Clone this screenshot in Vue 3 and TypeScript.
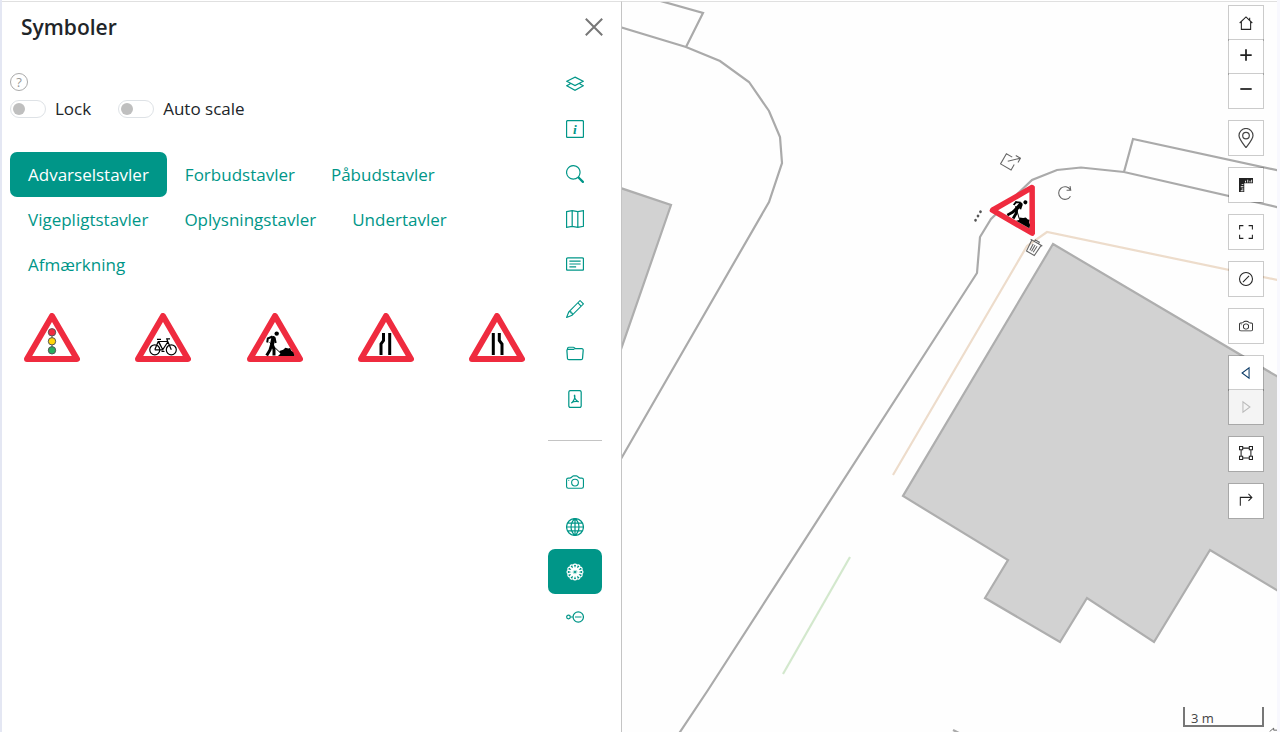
<script setup lang="ts">
import { ref } from 'vue'

interface Icon {
  stroke?: string
  fill?: string
  text?: string
}

function flower(): string {
  const point = (r: number, deg: number) => {
    const a = (deg * Math.PI) / 180
    return `${(8 + r * Math.cos(a)).toFixed(2)} ${(8 + r * Math.sin(a)).toFixed(2)}`
  }
  let d = ''
  for (let k = 0; k < 12; k++) {
    const c = k * 30
    d += `M${point(2.2, c)}L${point(6.3, c - 14)}A1.7 1.7 0 0 1 ${point(6.3, c + 14)}Z`
  }
  return d
}

const camera =
  'M15 12a1 1 0 0 1-1 1H2a1 1 0 0 1-1-1V6a1 1 0 0 1 1-1h1.172a3 3 0 0 0 2.12-.879l.83-.828A1 1 0 0 1 6.827 3h2.344a1 1 0 0 1 .707.293l.828.828A3 3 0 0 0 12.828 5H14a1 1 0 0 1 1 1zM2 4a2 2 0 0 0-2 2v6a2 2 0 0 0 2 2h12a2 2 0 0 0 2-2V6a2 2 0 0 0-2-2h-1.172a2 2 0 0 1-1.414-.586l-.828-.828A2 2 0 0 0 9.172 2H6.828a2 2 0 0 0-1.414.586l-.828.828A2 2 0 0 1 3.172 4zM8 11a2.5 2.5 0 1 1 0-5 2.5 2.5 0 0 1 0 5m0 1a3.5 3.5 0 1 0 0-7 3.5 3.5 0 0 0 0 7M3 6.5a.5.5 0 1 1-1 0 .5.5 0 0 1 1 0'

const icons: Record<string, Icon> = {
  layers: { stroke: 'M8 1.9 15.3 5.6 8 9.4 .7 5.6zM3.9 7.8 .7 9.6 8 13.5 15.3 9.6 12.1 7.8' },
  info: {
    stroke: 'M1.5.5h13a1 1 0 0 1 1 1v13a1 1 0 0 1-1 1h-13a1 1 0 0 1-1-1v-13a1 1 0 0 1 1-1z',
    text: 'i',
  },
  search: {
    fill: 'M11.742 10.344a6.5 6.5 0 1 0-1.397 1.398q.044.06.098.115l3.85 3.85a1 1 0 0 0 1.415-1.414l-3.85-3.85a1 1 0 0 0-.115-.1zM12 6.5a5.5 5.5 0 1 1-11 0 5.5 5.5 0 0 1 11 0',
  },
  map: { stroke: 'M.5 1.5 5.5.6l5 .9 5-.9v13.9l-5 .9-5-.9-5 .9zM5.5.6v13.9M10.5 1.5v13.9' },
  text: {
    stroke:
      'M1.5 2.5h13a1 1 0 0 1 1 1v9a1 1 0 0 1-1 1h-13a1 1 0 0 1-1-1v-9a1 1 0 0 1 1-1zM3 5.5h10M3 8h10M3 10.5h6',
  },
  pencil: {
    fill: 'M12.146.146a.5.5 0 0 1 .708 0l3 3a.5.5 0 0 1 0 .708l-10 10a.5.5 0 0 1-.168.11l-5 2a.5.5 0 0 1-.65-.65l2-5a.5.5 0 0 1 .11-.168zM11.207 2.5 13.5 4.793 14.793 3.5 12.5 1.207zm1.586 3L10.5 3.207 4 9.707V10h.5a.5.5 0 0 1 .5.5v.5h.5a.5.5 0 0 1 .5.5v.5h.293zm-9.761 5.175-.106.106-1.528 3.821 3.821-1.528.106-.106A.5.5 0 0 1 5 12.5V12h-.5a.5.5 0 0 1-.5-.5V11h-.5a.5.5 0 0 1-.468-.325',
  },
  folder: {
    stroke:
      'M1.3 4.2 1.4 2.9a1 1 0 0 1 1-.9h4.1c.9 0 1.4 1.3 2.4 1.3h5.2a1.2 1.2 0 0 1 1.2 1.3l-.6 7.4a1.2 1.2 0 0 1-1.2 1.1h-11a1.2 1.2 0 0 1-1.2-1.1L.8 5a1 1 0 0 1 1-1.1h5.7',
  },
  pdf: {
    stroke:
      'M4 .5h8A1.5 1.5 0 0 1 13.5 2v12a1.5 1.5 0 0 1-1.5 1.5H4A1.5 1.5 0 0 1 2.5 14V2A1.5 1.5 0 0 1 4 .5zM7.5 4.2c.7 1.600.4 2.900-.3 4.300-.7 1.400-1.500 2.500-2.200 3M7.500 4.500c-.2 2.300 1.300 4.700 3.800 6.100M4.600 11.500c1.800-1.200 4-1.600 6.700-1.100',
  },
  camera: { fill: camera },
  globe: {
    stroke:
      'M8 .5a7.500 7.500 0 1 0 0 15 7.500 7.500 0 0 0 0-15zM8 .5v15M.5 8h15M1.600 4.500h12.800M1.600 11.500h12.800M8 .5C3.300 4.500 3.300 11.500 8 15.500M8 .5c4.700 4 4.700 11 0 15',
  },
  flower: { stroke: flower() },
  node: {
    stroke:
      'M2.200 6.400a1.600 1.600 0 1 0 0 3.200 1.600 1.600 0 0 0 0-3.200zM3.800 8h2.400M10.900 3.400a4.600 4.600 0 1 0 0 9.200 4.600 4.600 0 0 0 0-9.200zM8 8h5.800',
  },
  home: { stroke: 'M.8 8 8 1l7.200 7M2.700 6.500v8.800h10.600V6.500M12.200 2v3' },
  plus: { stroke: 'M8 1.500v13M1.500 8h13' },
  minus: { stroke: 'M1.500 8h13' },
  pin: {
    stroke:
      'M8 17.600C4.500 13 1 9 1 5.500a7 7 0 0 1 14 0C15 9 11.500 13 8 17.600zM8 2.300a3.300 3.300 0 1 0 0 6.600 3.300 3.300 0 0 0 0-6.600z',
  },
  ruler: {
    fill: 'M0 0h16v6H6v10H0zM7 3v2h1V3zM9.500 2v3h1V2zM12 3v2h1V3zM14 2v3h1V2zM3 7v1h2V7zM2 9.500v1h3v-1zM3 12v1h2v-1zM2 14v1h3v-1z',
  },
  full: { stroke: 'M.7 5V.7H5M11 .7h4.300V5M15.300 11v4.300H11M5 15.300H.7V11' },
  compass: {
    stroke: 'M8 .6a7.400 7.400 0 1 0 0 14.800A7.400 7.400 0 0 0 8 .6zM4.500 11.500l7-7',
  },
  back: { stroke: 'M11.500 2v12L3.500 8z' },
  forward: { stroke: 'M4.500 2v12L12.500 8z' },
  box: {
    stroke:
      'M.6.6h3.600v3.600H.6zM11.800.6h3.600v3.600h-3.600zM.6 11.800h3.600v3.600H.6zM11.800 11.800h3.600v3.600h-3.600zM4.200 2.400h7.600M4.200 13.600h7.600M2.400 4.200v7.600M13.600 4.200v7.600',
  },
  turn: { stroke: 'M1.500 14.500V5h13M10.800 1 14.700 5l-3.900 4' },
}

const railTop = [
  ['layers', 'Lag'],
  ['info', 'Information'],
  ['search', 'Søg'],
  ['map', 'Baggrundskort'],
  ['text', 'Signatur'],
  ['pencil', 'Tegn'],
  ['folder', 'Projekter'],
  ['pdf', 'Udskriv'],
]
const railBottom = [
  ['camera', 'Foto'],
  ['globe', 'Kortkilder'],
  ['flower', 'Symboler'],
  ['node', 'Snit'],
]
const activeTool = ref('flower')

const categories = [
  'Advarselstavler',
  'Forbudstavler',
  'Påbudstavler',
  'Vigepligtstavler',
  'Oplysningstavler',
  'Undertavler',
  'Afmærkning',
]
const category = ref('Advarselstavler')
const signs = ['Lyssignal', 'Cyklister', 'Vejarbejde', 'Indsnævring venstre', 'Indsnævring højre']

const lock = ref(false)
const autoScale = ref(false)

const controls = [
  [['home', 'Hjem'], ['plus', 'Zoom ind'], ['minus', 'Zoom ud']],
  [['pin', 'Find mig']],
  [['ruler', 'Mål']],
  [['full', 'Fuld skærm']],
  [['compass', 'Nulstil']],
  [['camera', 'Skærmbillede']],
  [['back', 'Forrige'], ['forward', 'Næste']],
  [['box', 'Zoom til boks']],
  [['turn', 'Rute']],
]
</script>

<template>
  <div class="app">
    <svg class="defs" aria-hidden="true">
      <symbol id="worker" viewBox="0 0 56 50">
        <path class="plate" d="M28 3 53 46H3z" />
        <circle cx="29.700" cy="20.600" r="2.200" />
        <path class="torso" d="M26.300 25 25 31.500" />
        <path class="leg" d="M24.500 32 23 37l-3.300 5.500M25.500 32l1.500 4.500v6" />
        <path class="arm" d="M25.500 23.500 20.800 25.500 20.200 29.500M27.500 24.500l1.200 5.500" />
        <path class="tool" d="M22.500 29.500 33 39.500" />
        <path d="M31 43l2.300-2.300-.9-2.700 3.800-1.300 2.200-2 3 .8 1.700-.6 1 2.700 2.300 1.800 1.200 3.600z" />
      </symbol>
    </svg>

    <aside class="panel">
      <header class="head">
        <h1>Symboler</h1>
        <button class="close" type="button" aria-label="Luk">
          <svg viewBox="0 0 18 18"><path d="M.8.8l16.400 16.400M17.200.8.8 17.200" /></svg>
        </button>
      </header>

      <div class="body">
        <main class="content">
          <button class="help" type="button" aria-label="Hjælp">?</button>
          <div class="switches">
            <label><input v-model="lock" type="checkbox" role="switch" />Lock</label>
            <label><input v-model="autoScale" type="checkbox" role="switch" />Auto scale</label>
          </div>
          <nav class="tabs">
            <button
              v-for="c in categories"
              :key="c"
              type="button"
              :class="{ active: c === category }"
              @click="category = c"
            >{{ c }}</button>
          </nav>
          <div class="signs">
            <button v-for="(s, i) in signs" :key="s" type="button" :aria-label="s">
              <svg class="sign" viewBox="0 0 56 50">
                <use v-if="i === 2" href="#worker" width="56" height="50" />
                <path v-else class="plate" d="M28 3 53 46H3z" />
                <g v-if="i === 0" class="lights">
                  <path d="M28 20v18" />
                  <circle class="red" cx="28" cy="19.300" r="3.700" />
                  <circle class="yellow" cx="28" cy="28.300" r="3.700" />
                  <circle class="green" cx="28" cy="37.300" r="3.700" />
                </g>
                <g v-if="i === 1" class="bike">
                  <circle cx="19.800" cy="36.800" r="5" />
                  <circle cx="36.300" cy="36.800" r="5" />
                  <path d="M19.800 36.800l3.400-8.300h9.600l3.500 8.300M23.200 28.500l4.600 8 5.300-8M19.800 36.800h8l-4-8M22 26.300h4M32.800 29l-1-3.200h3.200M26.500 38.500h3" />
                </g>
                <path v-if="i === 3" class="lane" d="M25.500 20v7.500L23 31v11M31.700 20v22" />
                <path v-if="i === 4" class="lane" d="M24.300 20v22M30.300 20v7.500L33 31v11" />
              </svg>
            </button>
          </div>
        </main>

        <nav class="rail">
          <button
            v-for="[name, label] in railTop"
            :key="name"
            type="button"
            :aria-label="label"
            :class="{ active: activeTool === name }"
            @click="activeTool = name"
          >
            <svg class="icon" viewBox="0 0 16 16">
              <path v-if="icons[name].stroke" class="line" :d="icons[name].stroke" />
              <path v-if="icons[name].fill" class="solid" :d="icons[name].fill" />
              <text v-if="icons[name].text" x="8" y="12" text-anchor="middle">{{ icons[name].text }}</text>
            </svg>
          </button>
          <hr />
          <button
            v-for="[name, label] in railBottom"
            :key="name"
            type="button"
            :aria-label="label"
            :class="{ active: activeTool === name }"
            @click="activeTool = name"
          >
            <svg class="icon" viewBox="0 0 16 16">
              <path v-if="icons[name].stroke" class="line" :d="icons[name].stroke" />
              <path v-if="icons[name].fill" class="solid" :d="icons[name].fill" />
            </svg>
          </button>
        </nav>
      </div>
    </aside>

    <section class="map">
      <svg class="ground" viewBox="622 2 655 730" preserveAspectRatio="xMinYMin slice">
        <path class="house" d="M610 184.500 671 205 618 358z" />
        <path class="house" d="M1053 244l237 140v214l-80-48-56 92-67-44-27 44-75-44 23-38-105-64z" />
        <path class="road" d="M650-2 703 13 686 47" />
        <path class="road" d="M610 24l76 23 34 14 29 21 20 29 11 26 2 26-13 39L610 478" />
        <path class="road" d="M672 744l36-54 269-417 3-36 11-18 41-39 25-10 24-2.500 43 4.500 166 38M1124 172l9-33 157 34" />
        <path class="orange" d="M893 475l134-229 20-14 240 50" />
        <path class="green" d="M850 557 783 674" />
        <path class="road" d="M953 730l8 4" />
      </svg>

      <div class="marker">
        <svg class="placed" viewBox="0 0 56 50"><use href="#worker" width="56" height="50" /></svg>
        <button class="handle resize" type="button" aria-label="Skaler">
          <svg viewBox="0 0 20 20"><path d="M10 5H2.500v13H16v-7M8 11.500 18 2M12.500 1.500H18.500V7" /></svg>
        </button>
        <button class="handle rotate" type="button" aria-label="Roter">
          <svg viewBox="0 0 20 20"><path d="M13.500 4a7 7 0 1 0 3.500 6M11 .5l3 3.700-4 2.300" /></svg>
        </button>
        <button class="handle more" type="button" aria-label="Mere">
          <svg viewBox="0 0 20 20"><circle cx="10" cy="4.500" r="1.500" /><circle cx="10" cy="10" r="1.500" /><circle cx="10" cy="15.500" r="1.500" /></svg>
        </button>
        <button class="handle trash" type="button" aria-label="Slet">
          <svg viewBox="0 0 20 20"><path d="M2.500 4.500h15M7.500 4.500v-2h5v2M4 4.500 5 18h10l1-13.500M7.500 7.500l.4 8M10 7.500v8M12.500 7.500l-.4 8" /></svg>
        </button>
      </div>

      <div class="controls">
        <div v-for="(group, g) in controls" :key="g" class="group">
          <button
            v-for="[name, label] in group"
            :key="name"
            type="button"
            :aria-label="label"
            :disabled="name === 'forward'"
            :class="name"
          >
            <svg :viewBox="name === 'pin' ? '0 -2 16 20' : '0 0 16 16'">
              <path v-if="icons[name].stroke" class="line" :d="icons[name].stroke" />
              <path v-if="icons[name].fill" class="solid" :d="icons[name].fill" />
            </svg>
          </button>
        </div>
      </div>

      <div class="scale">3 m</div>
      <svg class="cursor" viewBox="0 0 12 6"><path d="M1 6l6-5v3h5" /></svg>
    </section>
  </div>
</template>

<style>
body {
  margin: 0;
}
</style>

<style scoped>
.app {
  box-sizing: border-box;
  display: flex;
  height: 100vh;
  overflow: hidden;
  padding-top: 1px;
  border-left: 2px solid #e4e7f3;
  border-right: 3px solid #f8f8fe;
  background: #fff;
  color: #212529;
  font-family: "Open Sans", "Noto Sans", sans-serif;
  font-size: 17px;
  line-height: 27px;
}
.app * {
  box-sizing: border-box;
}
button {
  margin: 0;
  padding: 0;
  border: 0;
  background: none;
  color: inherit;
  font: inherit;
  cursor: pointer;
}
svg {
  display: block;
}
.defs {
  position: absolute;
  width: 0;
  height: 0;
}
.panel {
  flex: none;
  width: 620px;
  border-top: 1px solid #e0e0e0;
  border-right: 1px solid #c4c4c4;
}
.head {
  display: flex;
  align-items: center;
  justify-content: space-between;
  height: 50px;
  padding: 0 18px 0 19px;
}
h1 {
  margin: 0;
  font-size: 21px;
  font-weight: 600;
  line-height: 30px;
}
.close svg {
  width: 18px;
  height: 18px;
  fill: none;
  stroke: #777;
  stroke-width: 2;
}
.body {
  display: flex;
  justify-content: space-between;
  padding: 9px 19px 0 8px;
}
.content {
  flex: 1;
  padding-top: 12px;
}
.help {
  display: block;
  width: 18px;
  height: 18px;
  border: 1px solid #aaa;
  border-radius: 50%;
  color: #999;
  font-size: 13px;
  line-height: 16px;
  text-align: center;
}
.switches {
  display: flex;
  gap: 27px;
  margin-top: 4px;
}
.switches label {
  display: flex;
  align-items: center;
  gap: 9px;
}
.switches input {
  appearance: none;
  width: 36px;
  height: 18px;
  margin: 0;
  padding: 2px;
  border: 1px solid #dee2e6;
  border-radius: 9px;
}
.switches input::before {
  content: "";
  display: block;
  width: 12px;
  height: 12px;
  border-radius: 50%;
  background: #bfbfbf;
}
.switches input:checked::before {
  margin-left: auto;
  background: #009688;
}
.tabs {
  display: flex;
  flex-wrap: wrap;
  margin-top: 30px;
}
.tabs button {
  height: 45px;
  padding: 0 18px;
  border-radius: 7px;
  color: #009688;
}
.tabs .active,
.rail .active {
  background: #009688;
  color: #fff;
}
.signs {
  display: flex;
  justify-content: space-between;
  margin-top: 26px;
  padding: 0 23px 0 14px;
}
.sign {
  width: 56px;
  height: 50px;
}
.plate {
  fill: #fff;
  stroke: #ef2b3f;
  stroke-width: 6;
  stroke-linejoin: round;
}
.torso,
.leg,
.arm,
.tool {
  fill: none;
  stroke: #000;
}
.torso {
  stroke-width: 4;
  stroke-linecap: round;
}
.leg {
  stroke-width: 3;
}
.arm {
  stroke-width: 2;
}
.tool {
  stroke-width: 1;
}
.lights {
  stroke: #555;
  stroke-width: 1;
}
.red {
  fill: #ef2b3f;
}
.yellow {
  fill: #ffd60a;
}
.green {
  fill: #27ae60;
}
.bike {
  fill: none;
  stroke: #000;
  stroke-width: 1.200;
}
.lane {
  fill: none;
  stroke: #000;
  stroke-width: 3;
}
.rail {
  flex: none;
  display: flex;
  flex-direction: column;
  width: 54px;
}
.rail button {
  display: flex;
  align-items: center;
  justify-content: center;
  height: 45px;
  border-radius: 7px;
  color: #009688;
}
.rail .active {
  color: #fff;
}
.rail hr {
  width: 100%;
  height: 1px;
  margin: 19px 0 18px;
  border: 0;
  background: #c4c4c4;
}
.icon {
  width: 18px;
  height: 18px;
}
.icon text {
  fill: currentColor;
  font-family: "Liberation Serif", serif;
  font-size: 12px;
  font-style: italic;
  font-weight: 700;
}
.line {
  fill: none;
  stroke: currentColor;
  stroke-width: 1.100;
}
.solid {
  fill: currentColor;
  fill-rule: evenodd;
}
.map {
  position: relative;
  flex: 1;
  overflow: hidden;
  border-top: 1px solid #e0e0e0;
  background: #fefefe;
}
.ground {
  width: 100%;
  height: 100%;
}
.ground path {
  fill: none;
  stroke-width: 2.200;
}
.ground .house {
  fill: #d2d2d2;
  stroke: #aeaeae;
}
.ground .road {
  stroke: #aaa;
}
.ground .orange {
  stroke: #eddccb;
}
.ground .green {
  stroke: #d3e8cd;
}
.marker {
  position: absolute;
  left: 346px;
  top: 146px;
  width: 110px;
  height: 120px;
}
.placed {
  position: absolute;
  left: 28px;
  top: 34px;
  width: 52px;
  height: 46px;
  transform: rotate(30deg);
}
.handle {
  position: absolute;
  width: 18px;
  height: 18px;
  transform: rotate(30deg);
}
.handle svg {
  width: 100%;
  height: 100%;
  fill: none;
  stroke: #666;
  stroke-width: 1.200;
}
.resize {
  left: 33px;
  top: 4px;
}
.rotate {
  left: 88px;
  top: 36px;
}
.more {
  left: 1px;
  top: 59px;
}
.more svg {
  fill: #555;
  stroke: none;
}
.trash {
  left: 57px;
  top: 90px;
}
.controls {
  position: absolute;
  top: 3px;
  right: 13px;
  display: flex;
  flex-direction: column;
  gap: 11px;
}
.group {
  display: flex;
  flex-direction: column;
}
.group button {
  display: flex;
  align-items: center;
  justify-content: center;
  width: 36px;
  height: 36px;
  border: 1px solid rgba(0, 0, 0, 0.2);
  background: #fff;
  background-clip: padding-box;
  color: #222;
}
.group button + button {
  margin-top: -2px;
}
.group svg {
  width: 14px;
  height: 14px;
}
.group .line {
  stroke-width: 1.200;
}
.group .plus,
.group .minus {
  padding-bottom: 4px;
}
.group .pin svg {
  width: 16px;
  height: 20px;
}
.group .pin {
  color: #444;
}
.group .plus .line,
.group .minus .line {
  stroke-width: 2;
}
.group .back {
  color: #0b3a66;
}
.group .forward {
  background-color: #f4f4f4;
  color: #bbb;
}
.group .box,
.group .turn {
  padding-bottom: 2px;
}
.scale {
  position: absolute;
  right: 13px;
  bottom: 5px;
  width: 81px;
  height: 20px;
  padding-left: 6px;
  border: 2px solid #777;
  border-top: 0;
  color: #444;
  font-size: 13px;
  line-height: 22px;
}
.cursor {
  position: absolute;
  right: 0;
  bottom: 0;
  width: 8px;
  height: 5px;
  fill: #fff;
  stroke: #222;
}
</style>
